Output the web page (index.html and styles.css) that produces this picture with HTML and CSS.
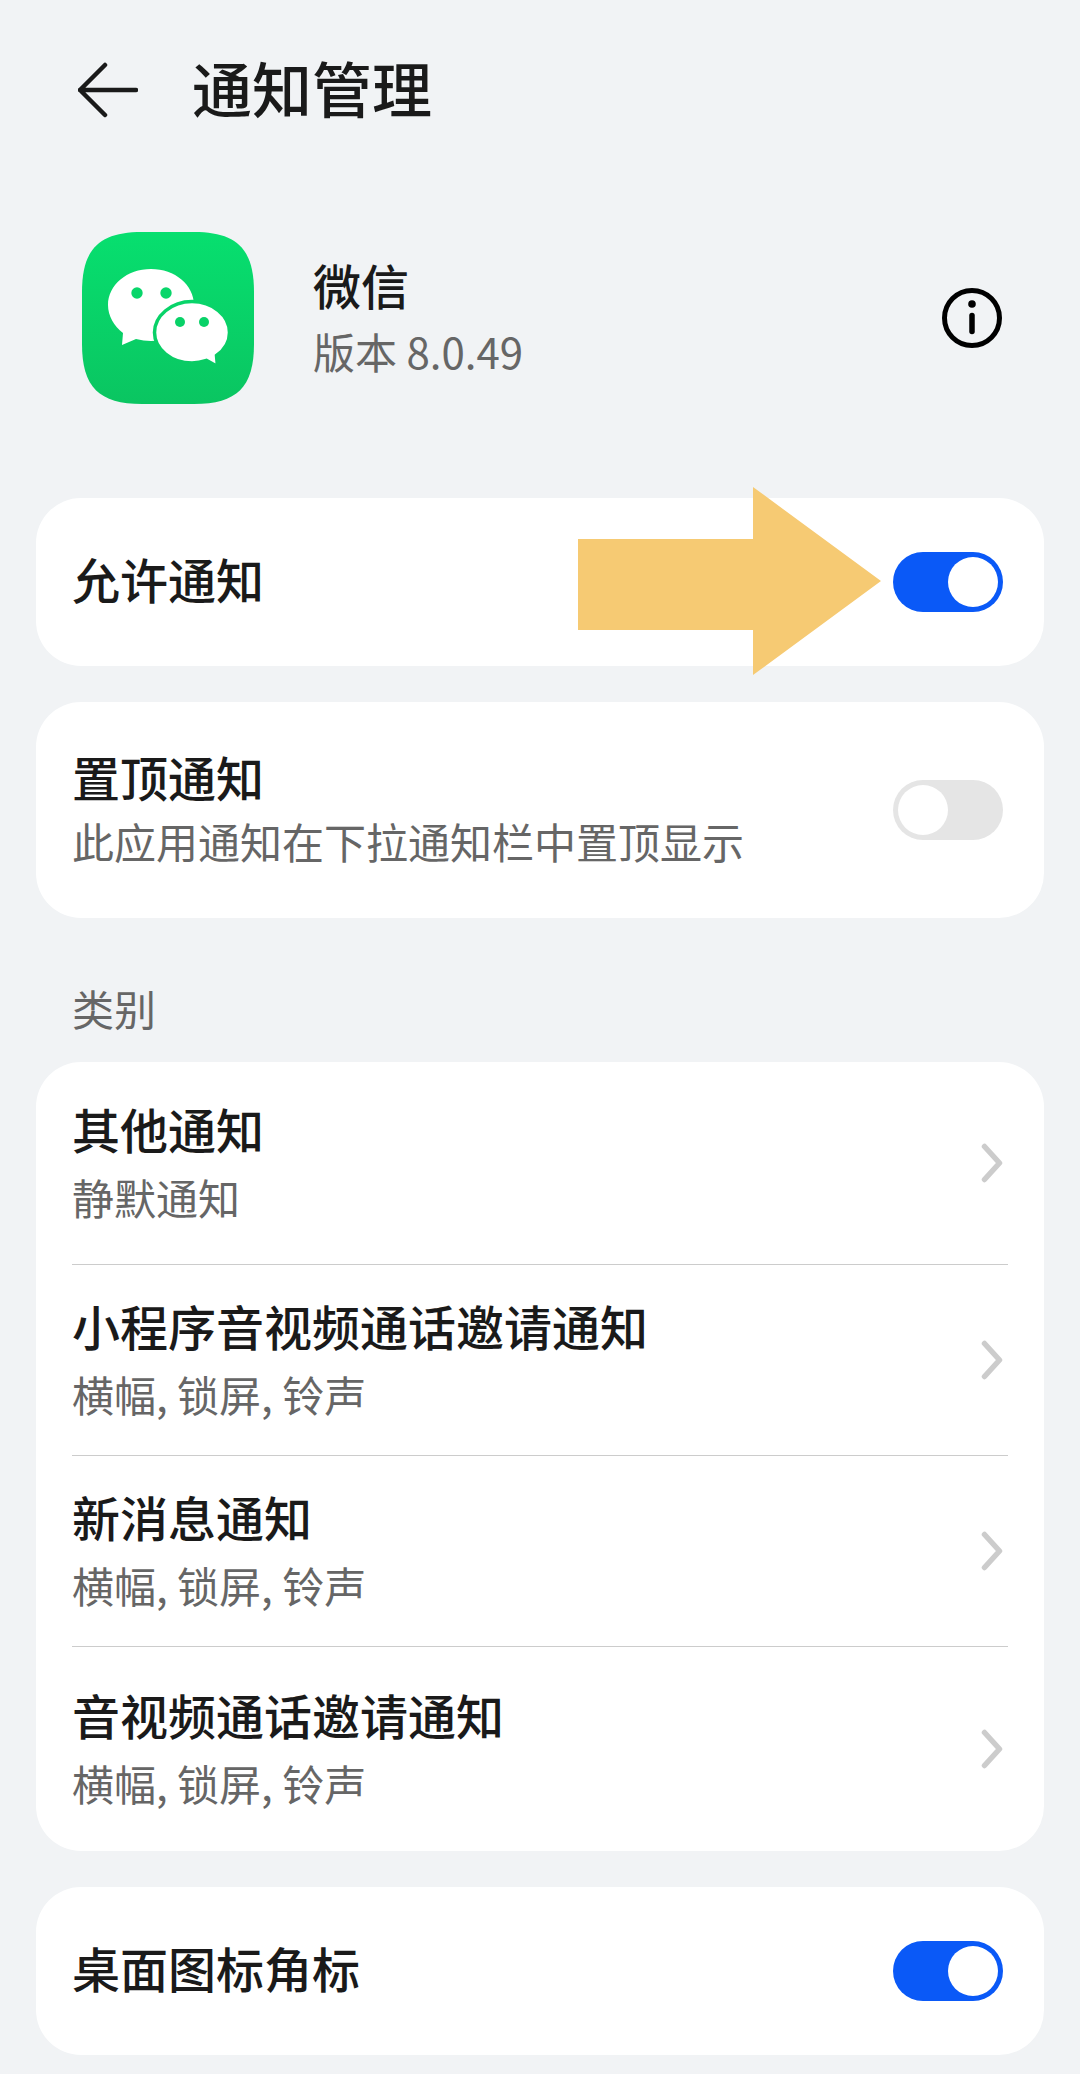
FILE: index.html
```html
<!DOCTYPE html>
<html lang="zh-CN">
<head>
<meta charset="utf-8">
<title>通知管理</title>
<link rel="stylesheet" href="styles.css">
</head>
<body>
<main class="page">
  <header class="topbar">
    <svg class="back" viewBox="0 0 60 56" aria-hidden="true"><path d="M27 3 2 28l25 25M2 28h56"/></svg>
    <h1 class="title">通知管理</h1>
  </header>

  <section class="app">
    <svg class="app-icon" viewBox="0 0 172 172" aria-hidden="true">
      <defs>
        <linearGradient id="wx" gradientUnits="userSpaceOnUse" x1="0" y1="0" x2="0" y2="172">
          <stop offset="0" stop-color="#07df6f"/>
          <stop offset="1" stop-color="#0ac561"/>
        </linearGradient>
      </defs>
      <path fill="url(#wx)" d="M60 0h52c43 0 60 17 60 60v52c0 43-17 60-60 60H60c-43 0-60-17-60-60V60C0 17 17 0 60 0z"/>
      <path fill="#fff" d="M69 37c24 0 43 16 43 36s-19 36-43 36c-5 0-10-1-15-2l-14 6 1-12C32 94 26 84 26 73c0-20 19-36 43-36z"/>
      <circle cx="55" cy="61" r="5.7" fill="url(#wx)"/>
      <circle cx="84" cy="61" r="5.7" fill="url(#wx)"/>
      <path fill="#fff" stroke="url(#wx)" stroke-width="3.5" d="M110 69.500c20.500 0 37.500 13.800 37.500 31 0 9.500-5 17.500-13 23l1 11-11-6c-4.500 1.500-9.500 2.500-14.500 2.500-20.500 0-37.500-13.800-37.500-30.500s17-31 37.500-31z"/>
      <circle cx="98" cy="90" r="5" fill="url(#wx)"/>
      <circle cx="122" cy="90" r="5" fill="url(#wx)"/>
    </svg>
    <div class="app-text">
      <div class="app-name">微信</div>
      <div class="app-version">版本 8.0.49</div>
    </div>
    <svg class="info" viewBox="0 0 60 60" aria-hidden="true">
      <circle cx="30" cy="30" r="27.500" class="info-ring"/>
      <circle cx="30" cy="16" r="3.800" class="info-dot"/>
      <path d="M30 27.500v16" class="info-bar"/>
    </svg>
  </section>

  <section class="card card-single">
    <div class="row-text"><div class="row-title">允许通知</div></div>
    <span class="switch on"><span class="knob"></span></span>
    <svg class="pointer" viewBox="0 0 303 188" aria-hidden="true"><path d="M0 52h175V0l128 94-128 94v-45H0z"/></svg>
  </section>

  <section class="card card-double">
    <div class="row-text">
      <div class="row-title">置顶通知</div>
      <div class="row-sub">此应用通知在下拉通知栏中置顶显示</div>
    </div>
    <span class="switch off"><span class="knob"></span></span>
  </section>

  <div class="section-label">类别</div>

  <section class="card card-list">
    <div class="row">
      <div class="row-text"><div class="row-title">其他通知</div><div class="row-sub">静默通知</div></div>
      <svg class="chev" viewBox="0 0 24 42" aria-hidden="true"><path d="M5.500 4.500 20.500 21 5.500 37.500"/></svg>
    </div>
    <div class="row">
      <div class="row-text"><div class="row-title">小程序音视频通话邀请通知</div><div class="row-sub">横幅, 锁屏, 铃声</div></div>
      <svg class="chev" viewBox="0 0 24 42" aria-hidden="true"><path d="M5.500 4.500 20.500 21 5.500 37.500"/></svg>
    </div>
    <div class="row">
      <div class="row-text"><div class="row-title">新消息通知</div><div class="row-sub">横幅, 锁屏, 铃声</div></div>
      <svg class="chev" viewBox="0 0 24 42" aria-hidden="true"><path d="M5.500 4.500 20.500 21 5.500 37.500"/></svg>
    </div>
    <div class="row">
      <div class="row-text"><div class="row-title">音视频通话邀请通知</div><div class="row-sub">横幅, 锁屏, 铃声</div></div>
      <svg class="chev" viewBox="0 0 24 42" aria-hidden="true"><path d="M5.500 4.500 20.500 21 5.500 37.500"/></svg>
    </div>
  </section>

  <section class="card card-single">
    <div class="row-text"><div class="row-title">桌面图标角标</div></div>
    <span class="switch on"><span class="knob"></span></span>
  </section>
</main>
</body>
</html>
```
FILE: styles.css
```css
* { box-sizing: border-box; }

html, body {
  margin: 0;
  padding: 0;
  background: #f1f3f5;
}

body {
  font-family: "Noto Sans CJK SC", "Noto Sans", sans-serif;
  color: #1a1a1a;
}

.page {
  width: 1080px;
  height: 2074px;
  padding: 0 36px;
  overflow: hidden;
  display: flex;
  flex-direction: column;
}

.topbar {
  height: 180px;
  padding-left: 42px;
  display: flex;
  align-items: center;
  gap: 54px;
}

.back {
  width: 60px;
  height: 56px;
  fill: none;
  stroke: #1a1a1a;
  stroke-width: 4.500;
  stroke-linecap: round;
  stroke-linejoin: round;
}

.title {
  margin: 0 0 6px;
  font-size: 60px;
  line-height: 80px;
  font-weight: 500;
}

.app {
  margin-top: 52px;
  height: 172px;
  padding-left: 46px;
  padding-right: 42px;
  display: flex;
  align-items: center;
}

.app-icon {
  width: 172px;
  height: 172px;
  flex: none;
}

.app-text {
  margin-left: 59px;
  flex: 1;
}

.app-name {
  font-size: 48px;
  line-height: 66px;
  font-weight: 500;
}

.app-version {
  font-size: 42px;
  line-height: 68px;
  color: #666;
}

.info {
  width: 60px;
  height: 60px;
  flex: none;
}

.info-ring {
  fill: none;
  stroke: #000;
  stroke-width: 5;
}

.info-dot { fill: #000; }

.info-bar {
  fill: none;
  stroke: #000;
  stroke-width: 5.500;
  stroke-linecap: round;
}

.card {
  position: relative;
  background: #fff;
  border-radius: 45px;
  margin-top: 36px;
}

.card-single {
  height: 168px;
  padding: 0 41px 0 36px;
  display: flex;
  align-items: center;
  justify-content: space-between;
}

.card-single .row-text { padding-bottom: 8px; }

.app + .card { margin-top: 94px; }

.card-double {
  height: 216px;
  padding: 0 41px 0 36px;
  display: flex;
  align-items: center;
  justify-content: space-between;
}

.card-double .row-text { padding-bottom: 2px; }
.card-double .row-title { line-height: 64px; }
.card-double .row-sub { line-height: 66px; }

.row-title {
  font-size: 48px;
  line-height: 68px;
  font-weight: 500;
}

.row-sub {
  font-size: 42px;
  line-height: 70px;
  color: #666;
}

.switch {
  position: relative;
  width: 110px;
  height: 60px;
  border-radius: 30px;
  flex: none;
  display: flex;
  align-items: center;
  padding: 5px;
}

.switch.on {
  background: #0a59f7;
  justify-content: flex-end;
}

.switch.off {
  background: #e5e5e5;
  justify-content: flex-start;
}

.knob {
  width: 50px;
  height: 50px;
  border-radius: 50%;
  background: #fff;
}

.pointer {
  position: absolute;
  left: 542px;
  top: -11px;
  width: 303px;
  height: 188px;
  fill: #f6ca73;
}

.section-label {
  margin-top: 60px;
  height: 70px;
  padding-left: 36px;
  font-size: 42px;
  line-height: 60px;
  color: #666;
}

.card-list {
  margin-top: 14px;
  padding: 0 36px;
}

.row {
  height: 191px;
  padding-right: 5px;
  display: flex;
  align-items: center;
  justify-content: space-between;
}

.row + .row { border-top: 1.500px solid #ccc; }
.row:first-child { height: 202px; }
.row:last-child { height: 205px; }

.chev {
  width: 24px;
  height: 42px;
  flex: none;
  fill: none;
  stroke: #ccc;
  stroke-width: 5.500;
  stroke-linecap: round;
  stroke-linejoin: round;
}
```
